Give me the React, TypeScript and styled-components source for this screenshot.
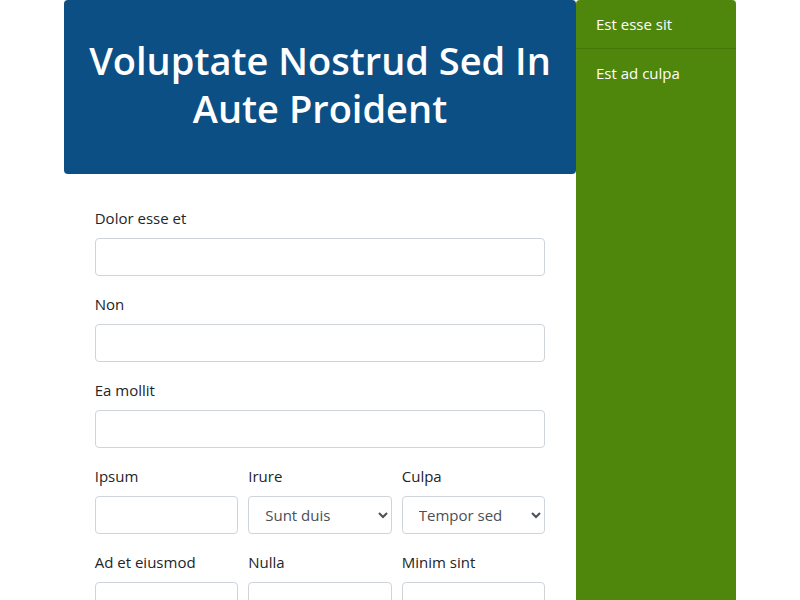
import React, { useId } from "react";
import styled, { createGlobalStyle, css } from "styled-components";

const GlobalStyle = createGlobalStyle`
  *, *::before, *::after { box-sizing: border-box; }
  html { scrollbar-width: none; }
  body {
    margin: 0;
    background: #fff;
    color: #212529;
    font-family: "Segoe UI", "Open Sans", "Noto Sans", sans-serif;
    font-size: 15px;
    line-height: 24px;
  }
`;

const Page = styled.div`
  display: grid;
  grid-template-columns: minmax(0, 16fr) minmax(0, 5fr);
  width: 84%;
  min-height: 100vh;
  margin: 0 auto;
`;

const Main = styled.main`
  min-width: 0;
`;

const Banner = styled.header`
  padding: 36px 16px 42px;
  border-radius: 4px;
  background: #0c4f85;
  color: #fff;
  text-align: center;
`;

const Title = styled.h1`
  margin: 0;
  font-size: 38px;
  font-weight: 600;
  line-height: 48px;
`;

const Form = styled.form`
  display: flex;
  flex-direction: column;
  gap: 16px;
  padding: 32px 6%;
`;

const FieldRow = styled.div`
  display: grid;
  grid-template-columns: repeat(3, minmax(0, 1fr));
  gap: 10px;
`;

const FieldGroup = styled.div`
  display: flex;
  flex-direction: column;
  gap: 8px;
`;

const controlStyle = css`
  width: 100%;
  height: 38px;
  padding: 6px 12px;
  border: 1px solid #ced4da;
  border-radius: 4px;
  background: #fff;
  color: #495057;
  font: inherit;
`;

const TextInput = styled.input`
  ${controlStyle}
`;

const Select = styled.select`
  ${controlStyle}
  padding-right: 0;
`;

const Sidebar = styled.nav`
  border-radius: 4px 4px 0 0;
  background: #4f870c;
`;

const NavList = styled.ul`
  margin: 0;
  padding: 0;
  list-style: none;
`;

const NavItem = styled.li`
  & + & {
    border-top: 1px solid rgba(0, 0, 0, 0.125);
  }
`;

const NavLink = styled.a`
  display: block;
  padding: 12px 20px;
  color: #fff;
  text-decoration: none;
`;

function Field({ label, options }: { label: string; options?: string[] }) {
  const id = useId();
  return (
    <FieldGroup>
      <label htmlFor={id}>{label}</label>
      {options ? (
        <Select id={id}>
          {options.map((option) => (
            <option key={option}>{option}</option>
          ))}
        </Select>
      ) : (
        <TextInput id={id} type="text" />
      )}
    </FieldGroup>
  );
}

export default function App() {
  return (
    <>
      <GlobalStyle />
      <Page>
        <Main>
          <Banner>
            <Title>Voluptate Nostrud Sed In Aute Proident</Title>
          </Banner>
          <Form>
            <Field label="Dolor esse et" />
            <Field label="Non" />
            <Field label="Ea mollit" />
            <FieldRow>
              <Field label="Ipsum" />
              <Field label="Irure" options={["Sunt duis"]} />
              <Field label="Culpa" options={["Tempor sed"]} />
            </FieldRow>
            <FieldRow>
              <Field label="Ad et eiusmod" />
              <Field label="Nulla" />
              <Field label="Minim sint" />
            </FieldRow>
          </Form>
        </Main>
        <Sidebar>
          <NavList>
            <NavItem>
              <NavLink href="#sit">Est esse sit</NavLink>
            </NavItem>
            <NavItem>
              <NavLink href="#culpa">Est ad culpa</NavLink>
            </NavItem>
          </NavList>
        </Sidebar>
      </Page>
    </>
  );
}
